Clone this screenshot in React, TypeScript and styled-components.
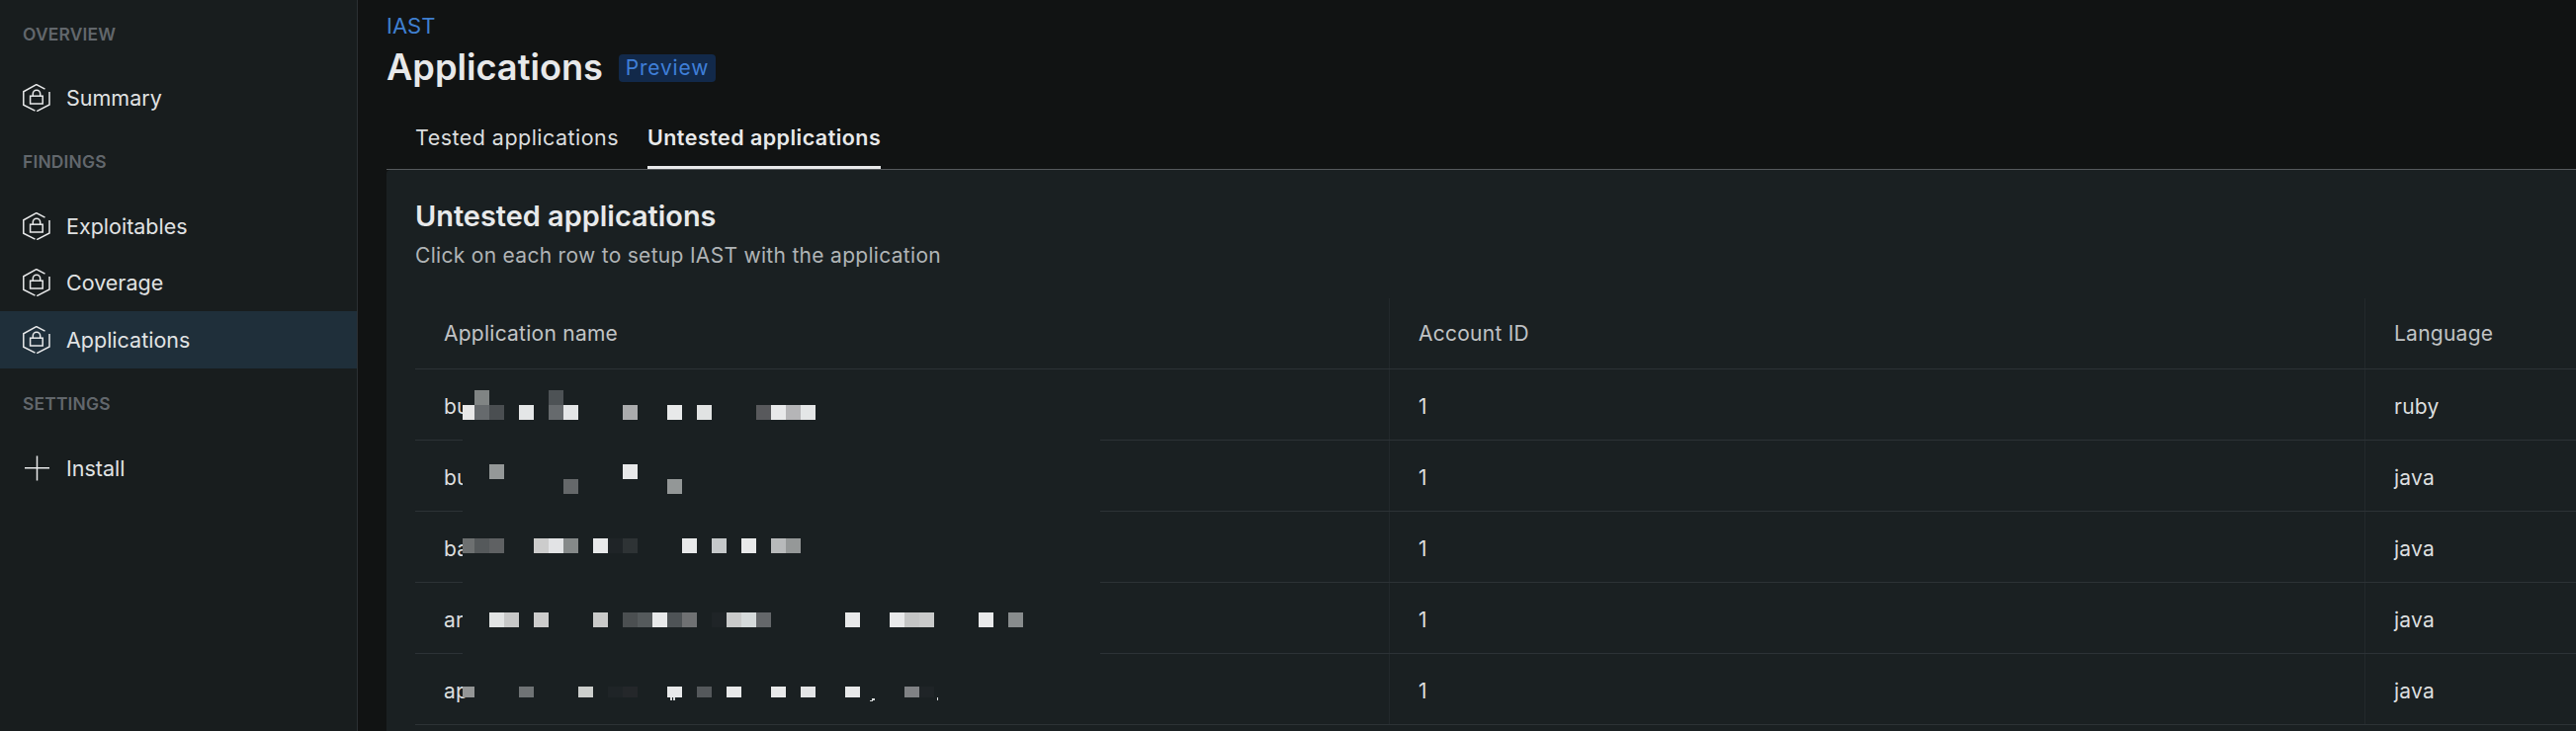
import React from "react";
import styled, { createGlobalStyle } from "styled-components";

const Global = createGlobalStyle`
  html, body { margin: 0; padding: 0; background: #111313; }
  body { font-family: Inter, "Liberation Sans", sans-serif; overflow: hidden; }
  #root { width: 2606px; height: 740px; overflow: hidden; }
`;

const Page = styled.div`
  display: flex;
  width: 2606px;
  height: 740px;
  overflow: hidden;
  background: #111313;
  color: #e8e9ea;
`;

const Sidebar = styled.nav`
  flex: 0 0 362px;
  box-sizing: border-box;
  height: 740px;
  background: #181d1e;
  border-right: 1px solid #2b3033;
  overflow: hidden;
`;

const SideInner = styled.div`
  margin-top: -2px;
`;

const SectionLabel = styled.div`
  box-sizing: border-box;
  height: 72.2px;
  padding-left: 23px;
  display: flex;
  align-items: center;
  font-size: 17.4px;
  font-weight: 600;
  letter-spacing: 0.2px;
  color: #62676c;
`;

const NavItem = styled.div<{ $active?: boolean }>`
  height: 57.6px;
  padding-left: 23px;
  display: flex;
  align-items: center;
  gap: 16px;
  font-size: 21.5px;
  color: #e0e2e3;
  background: ${(p) => (p.$active ? "#1f2f3a" : "transparent")};
`;

const Main = styled.main`
  flex: 1;
  min-width: 0;
  padding-left: 29px;
  display: flex;
  flex-direction: column;
`;

const Crumb = styled.div`
  margin-top: 13px;
  height: 27px;
  line-height: 27px;
  font-size: 22px;
  color: #3f7fd0;
`;

const TitleRow = styled.div`
  height: 56px;
  display: flex;
  align-items: center;
  gap: 16px;
`;

const Title = styled.h1`
  margin: 0;
  font-size: 36.2px;
  font-weight: 600;
  color: #e8e9ea;
`;

const Badge = styled.span`
  box-sizing: border-box;
  width: 98px;
  height: 28px;
  margin-top: 1px;
  border-radius: 4px;
  background: #12294a;
  color: #3f7fd8;
  font-size: 21px;
  letter-spacing: 0.8px;
  display: flex;
  align-items: center;
  justify-content: center;
`;

const TabBar = styled.div`
  height: 76px;
  box-sizing: border-box;
  padding: 0 29px;
  display: flex;
  gap: 29px;
  align-items: flex-end;
  border-bottom: 1px solid #55595c;
`;

const Tab = styled.div<{ $active?: boolean }>`
  box-sizing: border-box;
  height: 52px;
  padding-top: 7px;
  font-size: 21.5px;
  letter-spacing: 0.46px;
  font-weight: ${(p) => (p.$active ? 600 : 400)};
  color: ${(p) => (p.$active ? "#e8e9ea" : "#dcdedf")};
  border-bottom: 3px solid ${(p) => (p.$active ? "#e8e9ea" : "transparent")};
`;

const Card = styled.section`
  position: relative;
  flex: 1;
  background: #1a2022;
  border-radius: 4px 0 0 0;
  padding-left: 29px;
`;

const CardTitle = styled.h2`
  margin: 30px 0 0;
  height: 34px;
  line-height: 34px;
  font-size: 28.9px;
  font-weight: 600;
  color: #e8e9ea;
`;

const CardSub = styled.p`
  margin: 6px 0 0;
  height: 34px;
  line-height: 34px;
  font-size: 21px;
  letter-spacing: 0.3px;
  color: #b0b4b6;
`;

const TableGrid = styled.div`
  margin-top: 26px;
`;

const Row = styled.div`
  display: grid;
  grid-template-columns: 985px 987px 1fr;
  height: 72px;
  box-sizing: border-box;
  border-bottom: 1px solid #2c3236;
`;

const Cell = styled.div<{ $head?: boolean }>`
  box-sizing: border-box;
  display: flex;
  align-items: center;
  padding-left: 29px;
  padding-top: ${(p) => (p.$head ? 0 : 3)}px;
  font-size: 21px;
  letter-spacing: 0.25px;
  color: ${(p) => (p.$head ? "#c0c3c5" : "#dcdedf")};
  & + & {
    border-left: 1px solid #23292c;
  }
`;

const Mosaic = styled.svg`
  position: absolute;
  left: 77px;
  top: 223px;
`;

const HexLock = () => (
  <svg width="28" height="28" viewBox="0 0 28 28" fill="none" stroke="#e8e9ea" strokeWidth="1.5">
    <path d="M22.5 5.2 13.8 0.6 0.8 7.8v13.4l11.7 6" />
    <path d="M14.2 27.6 27 21V8" />
    <rect x="7.6" y="12.2" width="12.6" height="7.8" />
    <path d="M10.3 12.2V10a3.7 3.7 0 0 1 7.4 0v2.2" />
  </svg>
);

const PlusIcon = () => (
  <svg width="28" height="26" viewBox="0 0 28 26" fill="none" stroke="#e8e9ea" strokeWidth="1.5">
    <path d="M2 12.75h25M14.5 0.5v25" />
  </svg>
);

// [x, y, colour] on the 15px mosaic grid, in page coordinates
const C: [number, number, string][] = [
  [480, 395, "#808484"], [555, 395, "#4d5255"],
  [465, 410, "#e8e8e8"], [480, 410, "#666a6d"], [495, 410, "#4a4e51"], [525, 410, "#e4e6e7"], [555, 410, "#666a6d"],
  [570, 410, "#e4e6e7"], [630, 410, "#aaabad"], [675, 410, "#e8e9ea"], [705, 410, "#e1e3e3"], [765, 410, "#58595c"],
  [780, 410, "#e8e9ea"], [795, 410, "#b5b5b7"], [810, 410, "#e4e6e7"],
  [495, 470, "#949898"], [630, 470, "#e8e9ea"], [570, 485, "#65686a"], [675, 485, "#939797"],
  [465, 545, "#6d7071"], [480, 545, "#55595b"], [495, 545, "#5f6163"], [540, 545, "#cccccc"], [555, 545, "#e2e3e5"],
  [570, 545, "#858989"], [600, 545, "#e8e9ea"], [615, 545, "#1f2427"], [630, 545, "#2e3335"], [690, 545, "#e8e9ea"],
  [720, 545, "#c5c8ca"], [750, 545, "#e8e9ea"], [780, 545, "#b8babb"], [795, 545, "#959898"],
  [495, 620, "#e2e4e4"], [510, 620, "#c7c8c8"], [540, 620, "#cccccc"], [600, 620, "#c9cac9"], [630, 620, "#4b4f51"],
  [645, 620, "#555a5c"], [660, 620, "#e8e9ea"], [675, 620, "#4e5356"], [690, 620, "#6f7173"], [720, 620, "#1f2427"],
  [735, 620, "#c9caca"], [750, 620, "#d5dadb"], [765, 620, "#64676a"], [855, 620, "#e8e9ea"], [900, 620, "#e8e9ea"],
  [915, 620, "#c4c5c5"], [930, 620, "#c9caca"], [990, 620, "#e8e9ea"], [1020, 620, "#888c8d"],
  [465, 695, "#949696"], [525, 695, "#6f7375"], [585, 695, "#cccecc"], [615, 695, "#1f2427"], [630, 695, "#24272a"],
  [675, 695, "#e8e9ea"], [705, 695, "#54585b"], [735, 695, "#e8e9ea"], [780, 695, "#e8e9ea"], [810, 695, "#e3e4e6"],
  [855, 695, "#e8e9ea"], [915, 695, "#808285"], [930, 695, "#1f2427"],
];

const rows = [
  ["bu", "1", "ruby"],
  ["bu", "1", "java"],
  ["ba", "1", "java"],
  ["ar", "1", "java"],
  ["ap", "1", "java"],
];

export default function App() {
  return (
    <Page>
      <Global />
      <Sidebar>
        <SideInner>
          <SectionLabel>OVERVIEW</SectionLabel>
          <NavItem><HexLock />Summary</NavItem>
          <SectionLabel>FINDINGS</SectionLabel>
          <NavItem><HexLock />Exploitables</NavItem>
          <NavItem><HexLock />Coverage</NavItem>
          <NavItem $active><HexLock />Applications</NavItem>
          <SectionLabel>SETTINGS</SectionLabel>
          <NavItem><PlusIcon />Install</NavItem>
        </SideInner>
      </Sidebar>
      <Main>
        <Crumb>IAST</Crumb>
        <TitleRow>
          <Title>Applications</Title>
          <Badge>Preview</Badge>
        </TitleRow>
        <TabBar>
          <Tab>Tested applications</Tab>
          <Tab $active>Untested applications</Tab>
        </TabBar>
        <Card>
          <CardTitle>Untested applications</CardTitle>
          <CardSub>Click on each row to setup IAST with the application</CardSub>
          <TableGrid>
            <Row>
              <Cell $head>Application name</Cell>
              <Cell $head>Account ID</Cell>
              <Cell $head>Language</Cell>
            </Row>
            {rows.map((r, i) => (
              <Row key={i}>
                <Cell>{r[0]}</Cell>
                <Cell>{r[1]}</Cell>
                <Cell>{r[2]}</Cell>
              </Row>
            ))}
          </TableGrid>
          <Mosaic width="645" height="316" viewBox="468 395 645 316" shapeRendering="crispEdges">
            <rect x="468" y="395" width="645" height="311" fill="#1a2022" />
            {C.map(([x, y, c], i) => (
              <rect key={i} x={x} y={y} width="15" height={y === 695 ? 11 : 15} fill={c} />
            ))}
            <path d="M678 706h2v3h-2zM681 706h2v3h-2zM882 707h3v2h-3zM880 709h3v1h-3zM948 706h1v3h-1z" fill="#d8dadb" />
          </Mosaic>
        </Card>
      </Main>
    </Page>
  );
}
